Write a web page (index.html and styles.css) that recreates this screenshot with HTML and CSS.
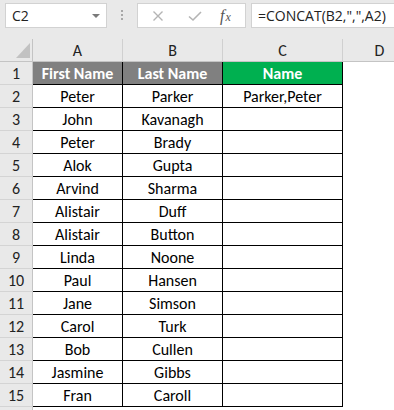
FILE: index.html
```html
<!DOCTYPE html>
<html>
<head>
<meta charset="utf-8">
<link rel="stylesheet" href="styles.css">
</head>
<body>
<div class="app">
  <div class="toolbar">
    <div class="namebox"><span class="ref">C2</span><span class="caret"></span></div>
    <div class="grip"><i></i><i></i><i></i></div>
    <div class="fxbtns">
      <svg class="ico" width="12" height="12" viewBox="0 0 12 12"><path d="M1.5 1.5 L10.5 10.5 M10.5 1.5 L1.5 10.5" stroke="#b4b4b4" stroke-width="1.4" fill="none"/></svg>
      <svg class="ico" width="14" height="12" viewBox="0 0 14 12"><path d="M1 6.5 L5 10 L13 2" stroke="#b4b4b4" stroke-width="1.6" fill="none"/></svg>
      <span class="fx"><span class="f">f</span><span class="x">x</span></span>
    </div>
    <div class="formula">=CONCAT(B2,",",A2)</div>
  </div>
  <div class="sheet">
    <div class="corner"><span class="tri"></span></div>
    <div class="hdr">A</div><div class="hdr">B</div><div class="hdr">C</div><div class="hdr">D</div><div class="hdr"></div>

    <div class="rh">1</div><div class="c t">First Name</div><div class="c t">Last Name</div><div class="c g">Name</div><div class="e"></div><div class="e"></div>
    <div class="rh">2</div><div class="c">Peter</div><div class="c">Parker</div><div class="c">Parker,Peter</div><div class="e"></div><div class="e"></div>
    <div class="rh">3</div><div class="c">John</div><div class="c">Kavanagh</div><div class="c"></div><div class="e"></div><div class="e"></div>
    <div class="rh">4</div><div class="c">Peter</div><div class="c">Brady</div><div class="c"></div><div class="e"></div><div class="e"></div>
    <div class="rh">5</div><div class="c">Alok</div><div class="c">Gupta</div><div class="c"></div><div class="e"></div><div class="e"></div>
    <div class="rh">6</div><div class="c">Arvind</div><div class="c">Sharma</div><div class="c"></div><div class="e"></div><div class="e"></div>
    <div class="rh">7</div><div class="c">Alistair</div><div class="c">Duff</div><div class="c"></div><div class="e"></div><div class="e"></div>
    <div class="rh">8</div><div class="c">Alistair</div><div class="c">Button</div><div class="c"></div><div class="e"></div><div class="e"></div>
    <div class="rh">9</div><div class="c">Linda</div><div class="c">Noone</div><div class="c"></div><div class="e"></div><div class="e"></div>
    <div class="rh">10</div><div class="c">Paul</div><div class="c">Hansen</div><div class="c"></div><div class="e"></div><div class="e"></div>
    <div class="rh">11</div><div class="c">Jane</div><div class="c">Simson</div><div class="c"></div><div class="e"></div><div class="e"></div>
    <div class="rh">12</div><div class="c">Carol</div><div class="c">Turk</div><div class="c"></div><div class="e"></div><div class="e"></div>
    <div class="rh">13</div><div class="c">Bob</div><div class="c">Cullen</div><div class="c"></div><div class="e"></div><div class="e"></div>
    <div class="rh">14</div><div class="c">Jasmine</div><div class="c">Gibbs</div><div class="c"></div><div class="e"></div><div class="e"></div>
    <div class="rh">15</div><div class="c">Fran</div><div class="c">Caroll</div><div class="c"></div><div class="e"></div><div class="e"></div>
    <div class="rh"></div><div class="e"></div><div class="e"></div><div class="e"></div><div class="e"></div><div class="e"></div>
  </div>
</div>
</body>
</html>
```

FILE: styles.css
```css
html, body {
  margin: 0;
  padding: 0;
  background: #ffffff;
}

.app {
  width: 394px;
  height: 410px;
  overflow: hidden;
  background: #ffffff;
  font-family: Carlito, Lato, "Liberation Sans", sans-serif;
}

.toolbar {
  display: flex;
  align-items: flex-start;
  height: 39px;
  box-sizing: border-box;
  padding: 3px 0 0 5px;
  background: #e9e9e9;
}

.namebox {
  width: 102px;
  height: 25px;
  box-sizing: border-box;
  background: #fff;
  border: 1px solid #d2d2d2;
  display: flex;
  align-items: center;
  justify-content: space-between;
  padding: 0 6px 0 6px;
  font-family: "Open Sans", "Noto Sans", sans-serif;
  font-size: 14px;
  color: #222;
}

.caret {
  width: 0;
  height: 0;
  border-left: 4px solid transparent;
  border-right: 4px solid transparent;
  border-top: 4px solid #7a7a7a;
}

.grip {
  display: flex;
  flex-direction: column;
  gap: 2px;
  margin: 7px 14px 0 14px;
}

.grip i {
  display: block;
  width: 2px;
  height: 2px;
  background: #a8a8a8;
}

.fxbtns {
  width: 109px;
  height: 25px;
  box-sizing: border-box;
  background: #fff;
  border: 1px solid #d2d2d2;
  display: flex;
  align-items: center;
  padding-left: 14px;
}

.fxbtns .ico:first-child {
  margin-right: 24px;
}

.fxbtns .ico + .ico {
  margin-right: 18px;
}

.fx {
  font-family: "Liberation Serif", "DejaVu Serif", serif;
  font-style: italic;
  color: #555;
  display: flex;
  align-items: baseline;
}

.fx .f {
  font-size: 16px;
}

.fx .x {
  font-size: 12px;
  margin-left: 1px;
}

.formula {
  flex: 1;
  height: 25px;
  box-sizing: border-box;
  margin-left: 5px;
  background: #fff;
  border: 1px solid #d2d2d2;
  border-right: none;
  display: flex;
  align-items: center;
  padding-left: 6px;
  font-family: "Open Sans", "Noto Sans", sans-serif;
  font-size: 14px;
  color: #222;
  white-space: nowrap;
}

.sheet {
  display: grid;
  grid-template-columns: 33px 90px 100px 120px 74px 100px;
  grid-auto-rows: 23px;
}

.sheet > div {
  box-sizing: border-box;
  display: flex;
  align-items: center;
  justify-content: center;
  font-size: 16px;
  white-space: nowrap;
  overflow: hidden;
}

.corner {
  background: #e9e9e9;
  border-right: 1px solid #c4c4c4;
  border-bottom: 1px solid #c4c4c4;
  position: relative;
}

.tri {
  position: absolute;
  left: 16px;
  top: 4px;
  width: 14px;
  height: 15px;
  background: #c2c2c2;
  clip-path: polygon(100% 0, 100% 100%, 0 100%);
}

.hdr {
  background: #e9e9e9;
  border-right: 1px solid #d0d0d0;
  border-bottom: 1px solid #c4c4c4;
  color: #222;
}

.rh {
  background: #e9e9e9;
  border-right: 1px solid #c4c4c4;
  border-bottom: 1px solid #d4d4d4;
  color: #222;
}

.c {
  background: #fff;
  border-right: 1px solid #000;
  border-bottom: 1px solid #000;
  color: #000;
}

.c.t {
  background: #808080;
  color: #fff;
  font-weight: bold;
}

.c.g {
  background: #00b050;
  color: #fff;
  font-weight: bold;
}

.e {
  background: #fff;
}
```
